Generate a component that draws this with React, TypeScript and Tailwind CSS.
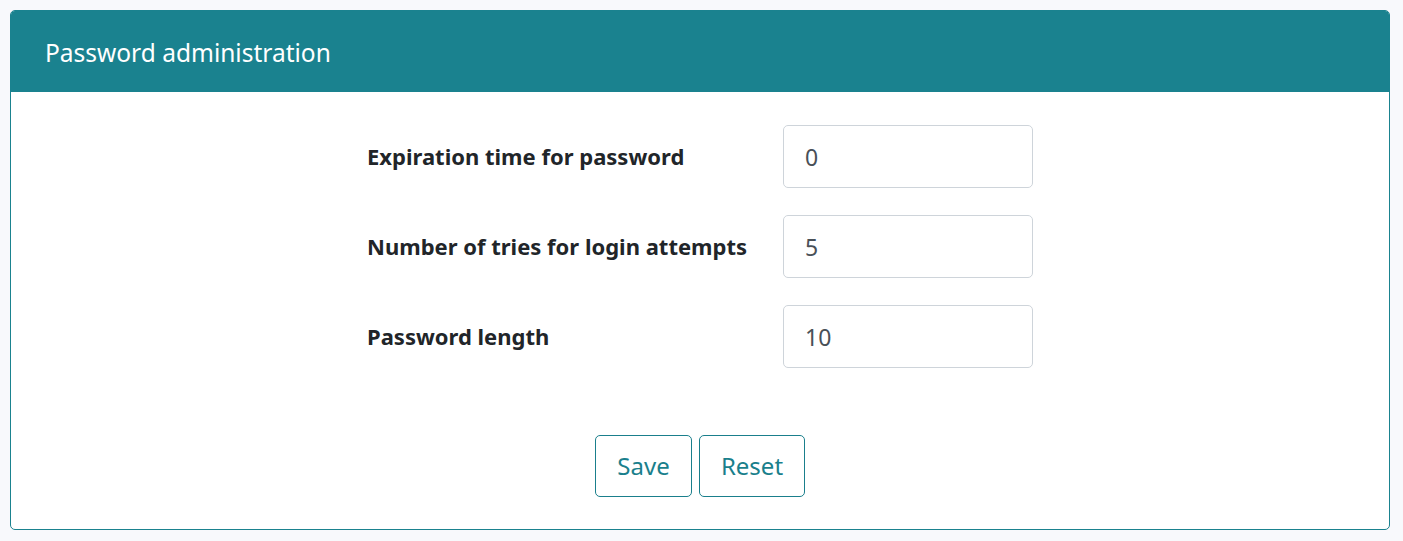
const fields = [
  { label: "Expiration time for password", value: "0" },
  { label: "Number of tries for login attempts", value: "5" },
  { label: "Password length", value: "10" },
];

export default function App() {
  return (
    <div className="min-h-[541px] bg-[#f8f9fc] p-[10px] pr-[13px] font-['Noto_Sans',sans-serif]">
      <div className="rounded-[5px] border border-[#1a828f] bg-white overflow-hidden">
        <div className="h-[81px] bg-[#1a828f] px-[34px] pt-[3px] flex items-center">
          <h1 className="text-[24.5px] text-white leading-none">Password administration</h1>
        </div>
        <div className="pt-[33px] pb-[32px] flex flex-col items-center">
          <div className="flex flex-col gap-[27px]">
            {fields.map((f) => (
              <div key={f.label} className="flex items-center">
                <label className="w-[416px] text-[22px] font-bold text-[#212529]">{f.label}</label>
                <input
                  defaultValue={f.value}
                  className="w-[250px] h-[63px] rounded-[5px] border border-[#ced4da] px-[21px] text-[23px] text-[#495057] outline-none"
                />
              </div>
            ))}
          </div>
          <div className="mt-[67px] flex gap-[7px]">
            <button className="w-[97px] h-[62px] rounded-[5px] border border-[#1a7f8c] text-[24px] text-[#1a7f8c]">Save</button>
            <button className="w-[106px] h-[62px] rounded-[5px] border border-[#1a7f8c] text-[24px] text-[#1a7f8c]">Reset</button>
          </div>
        </div>
      </div>
    </div>
  );
}
